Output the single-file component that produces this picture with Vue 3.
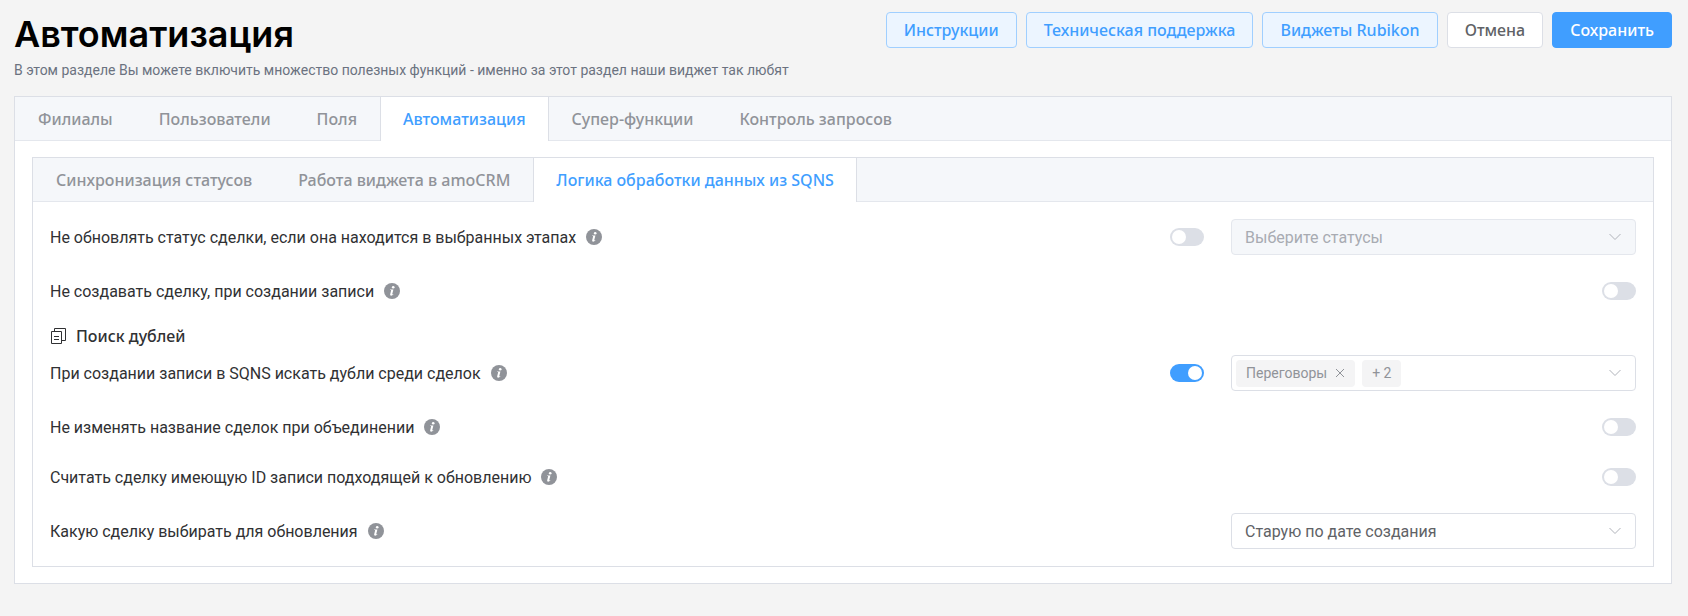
<script setup>
import { ref } from 'vue'

const actions = [
  { label: 'Инструкции', kind: 'plain' },
  { label: 'Техническая поддержка', kind: 'plain' },
  { label: 'Виджеты Rubikon', kind: 'plain' },
  { label: 'Отмена', kind: 'default' },
  { label: 'Сохранить', kind: 'primary' },
]

const mainTabs = ['Филиалы', 'Пользователи', 'Поля', 'Автоматизация', 'Супер-функции', 'Контроль запросов']
const mainTab = ref('Автоматизация')

const subTabs = ['Синхронизация статусов', 'Работа виджета в amoCRM', 'Логика обработки данных из SQNS']
const subTab = ref('Логика обработки данных из SQNS')

const rows = ref([
  { id: 'keep-status', label: 'Не обновлять статус сделки, если она находится в выбранных этапах', toggle: true, on: false, field: 'select', disabled: true, options: ['Выберите статусы'] },
  { id: 'no-create', label: 'Не создавать сделку, при создании записи', toggle: true, on: false },
  { id: 'find-duplicates', heading: 'Поиск дублей', label: 'При создании записи в SQNS искать дубли среди сделок', toggle: true, on: true, field: 'tags', tags: ['Переговоры'], more: 2 },
  { id: 'keep-name', label: 'Не изменять название сделок при объединении', toggle: true, on: false },
  { id: 'match-id', label: 'Считать сделку имеющую ID записи подходящей к обновлению', toggle: true, on: false },
  { id: 'which-deal', label: 'Какую сделку выбирать для обновления', toggle: false, field: 'select', disabled: false, options: ['Старую по дате создания'] },
])
</script>

<template>
  <div class="page">
    <header class="head">
      <div>
        <h1>Автоматизация</h1>
        <p>В этом разделе Вы можете включить множество полезных функций - именно за этот раздел наши виджет так любят</p>
      </div>
      <div class="actions">
        <button v-for="a in actions" :key="a.label" type="button" class="btn" :class="a.kind">{{ a.label }}</button>
      </div>
    </header>

    <section class="card">
      <nav class="tabs" role="tablist">
        <button v-for="t in mainTabs" :key="t" type="button" role="tab" class="tab" :class="{ active: t === mainTab }" :aria-selected="t === mainTab" @click="mainTab = t">{{ t }}</button>
      </nav>
      <div class="body">
        <section class="card">
          <nav class="tabs" role="tablist">
            <button v-for="t in subTabs" :key="t" type="button" role="tab" class="tab" :class="{ active: t === subTab }" :aria-selected="t === subTab" @click="subTab = t">{{ t }}</button>
          </nav>
          <div class="body settings">
            <div v-for="r in rows" :key="r.id" class="group">
              <h2 v-if="r.heading">
                <svg width="16" height="16" viewBox="0 0 16 16" fill="none" stroke="#303133" aria-hidden="true">
                  <path d="M1.500 3.500h10v12h-10zM4.500 3V.5h11v12H12M4 8.500h5M4 11.500h5" />
                </svg>
                {{ r.heading }}
              </h2>
              <div class="row">
                <label class="name" :for="r.id">{{ r.label }}</label>
                <svg class="info" width="16" height="16" viewBox="0 0 16 16" aria-hidden="true">
                  <circle cx="8" cy="8" r="8" fill="#909399" />
                  <circle cx="9.2" cy="4.2" r="1.3" fill="#fff" />
                  <path d="M6.100 6.400h3.300L8.200 11.200c-.1.500.3.400.9-.1l.3.500c-1.400 1.400-3.700 1.500-3.200-.4l.9-3.600c.1-.5-.2-.6-1-.6z" fill="#fff" />
                </svg>
                <div class="controls">
                  <input v-if="r.toggle" :id="r.id" v-model="r.on" type="checkbox" role="switch" class="switch" />
                  <div v-if="r.field === 'select'" class="field">
                    <select :id="r.toggle ? r.id + '-value' : r.id" :disabled="r.disabled" :aria-label="r.label">
                      <option v-for="o in r.options" :key="o">{{ o }}</option>
                    </select>
                    <svg class="arrow" width="14" height="8" viewBox="0 0 14 8" fill="none" stroke="#b0b3ba" aria-hidden="true"><path d="M1.500 1l5.500 5.500L12.500 1" /></svg>
                  </div>
                  <div v-if="r.field === 'tags'" class="field multi">
                    <span v-for="t in r.tags" :key="t" class="tag">
                      {{ t }}
                      <button type="button" :aria-label="'Удалить ' + t">
                        <svg width="10" height="10" viewBox="0 0 10 10" stroke="#909399" aria-hidden="true"><path d="M1 1l8 8M9 1L1 9" /></svg>
                      </button>
                    </span>
                    <span class="tag">+ {{ r.more }}</span>
                    <svg class="arrow" width="14" height="8" viewBox="0 0 14 8" fill="none" stroke="#b0b3ba" aria-hidden="true"><path d="M1.500 1l5.500 5.500L12.500 1" /></svg>
                  </div>
                </div>
              </div>
            </div>
          </div>
        </section>
      </div>
    </section>
  </div>
</template>

<style>
body {
  margin: 0;
  background: #f4f4f4;
}
</style>

<style scoped>
.page {
  padding: 12px 16px 32px 14px;
  font-family: Roboto, "Liberation Sans", sans-serif;
  font-size: 16px;
  color: #303133;
}
.page * {
  box-sizing: border-box;
}
button,
select {
  font: inherit;
}
h1 {
  font-family: Inter, Roboto, sans-serif;
}
h2,
.btn,
.tab {
  font-family: "Noto Sans", Roboto, sans-serif;
}
.head {
  display: flex;
  justify-content: space-between;
  align-items: flex-start;
  margin-bottom: 16px;
}
h1 {
  margin: 0 0 4px;
  font-size: 36px;
  line-height: 44px;
  font-weight: 600;
  color: #000;
}
p {
  margin: 0;
  font-size: 14px;
  line-height: 20px;
  color: #6b7280;
}
.actions {
  display: flex;
  gap: 9px;
}
.btn {
  height: 36px;
  padding: 0 17px;
  border: 1px solid #dcdfe6;
  border-radius: 4px;
  background: #fff;
  color: #606266;
  font-size: 16px;
  font-weight: 500;
  white-space: nowrap;
  cursor: pointer;
}
.btn.plain {
  border-color: #a0cfff;
  background: #ecf5ff;
  color: #409eff;
}
.btn.primary {
  border-color: #409eff;
  background: #409eff;
  color: #fff;
}
.card {
  border: 1px solid #dcdfe6;
  background: #fff;
}
.tabs {
  display: flex;
  background: #f5f7fa;
  border-bottom: 1px solid #e4e7ed;
}
.tab {
  height: 44px;
  margin-bottom: -1px;
  padding: 0 22px;
  border: 0 solid transparent;
  border-width: 0 1px;
  background: none;
  color: #909399;
  font-size: 16px;
  font-weight: 500;
  white-space: nowrap;
  cursor: pointer;
}
.tab.active {
  border-color: #dcdfe6;
  background: #fff;
  color: #409eff;
}
.body {
  padding: 16px 17px;
}
.settings {
  display: flex;
  flex-direction: column;
  gap: 22px;
  padding: 17px;
}
.group:has(h2) {
  margin-top: -4px;
}
h2 {
  display: flex;
  align-items: center;
  gap: 10px;
  margin: 0 0 6px;
  font-size: 16px;
  line-height: 26px;
  font-weight: 500;
}
.row {
  display: flex;
  align-items: center;
  gap: 10px;
  min-height: 28px;
}
.info {
  flex: none;
}
.controls {
  flex: 1;
  display: flex;
  align-items: center;
  justify-content: flex-end;
  gap: 27px;
}
.switch {
  appearance: none;
  display: flex;
  align-items: center;
  width: 34px;
  height: 18px;
  margin: 0;
  padding: 0 2px;
  border-radius: 9px;
  background: #dcdfe6;
  cursor: pointer;
}
.switch::before {
  content: "";
  width: 14px;
  height: 14px;
  border-radius: 50%;
  background: #fff;
}
.switch:checked {
  justify-content: flex-end;
  background: #409eff;
}
.field {
  position: relative;
  width: 25%;
  min-width: 405px;
  height: 36px;
}
select,
.multi {
  border: 1px solid #dcdfe6;
  border-radius: 4px;
  background: #fff;
}
select {
  appearance: none;
  width: 100%;
  height: 100%;
  padding: 0 40px 0 13px;
  color: #606266;
}
select:disabled {
  border-color: #e4e7ed;
  background: #f5f7fa;
  color: #a8abb2;
  opacity: 1;
}
.arrow {
  position: absolute;
  right: 14px;
  top: 14px;
  pointer-events: none;
}
.multi {
  display: flex;
  align-items: center;
  gap: 7px;
  padding-left: 4px;
}
.multi .arrow {
  right: 13px;
  top: 13px;
}
.tag {
  display: flex;
  align-items: center;
  gap: 8px;
  height: 27px;
  padding: 0 10px;
  border-radius: 4px;
  background: #f4f4f5;
  color: #909399;
  font-size: 14px;
}
.tag button {
  display: flex;
  padding: 0;
  border: 0;
  background: none;
  cursor: pointer;
}
</style>
